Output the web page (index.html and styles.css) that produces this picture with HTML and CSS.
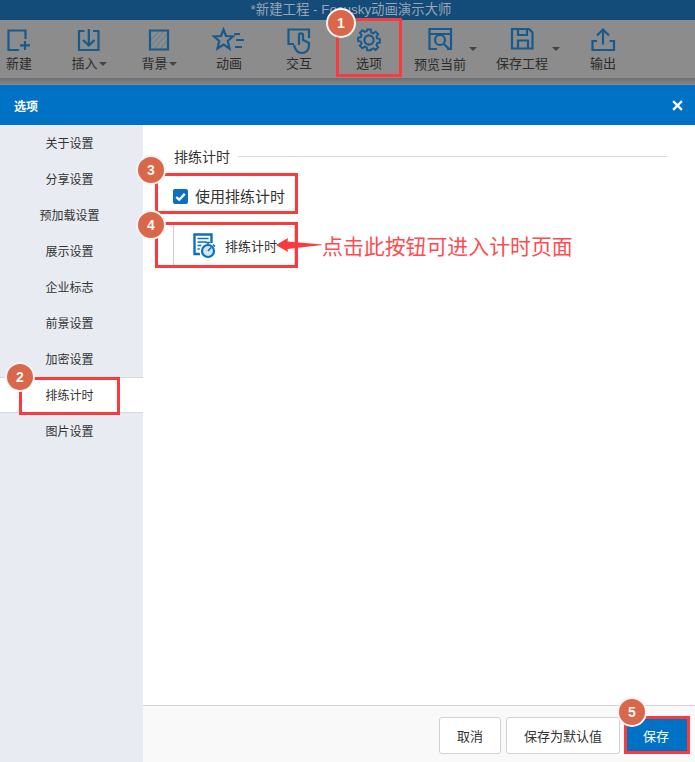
FILE: index.html
```html
<!DOCTYPE html>
<html lang="zh-CN">
<head>
    <meta charset="UTF-8">
    <title>选项</title>
    <link rel="stylesheet" href="styles.css">
</head>
<body>
    <div class="app">
        <div class="titlebar">*新建工程 - Focusky动画演示大师</div>

        <div class="toolbar">
            <div class="tool">
                <svg class="tool-icon" viewBox="0 0 26 26"><path d="M13 24H2.500V4.500H19.500V13M14 19.300H24M19 15V24"/></svg>
                <span>新建</span>
            </div>
            <div class="tool">
                <svg class="tool-icon" viewBox="0 0 26 26"><path d="M8.500 5H3V24H22.500V5H17M12.800 3V19.500M7 14L12.800 19.500 18.500 14"/></svg>
                <span>插入<i class="caret"></i></span>
            </div>
            <div class="tool">
                <svg class="tool-icon" viewBox="0 0 26 26"><path class="hatch" d="M5 14l8-9M5 20L18 5M8 23L21 8M14 23l7-8"/><path d="M4 4.500h18v19H4z"/></svg>
                <span>背景<i class="caret"></i></span>
            </div>
            <div class="tool">
                <svg class="tool-icon wide" viewBox="0 0 32 26"><path d="M10.500 3.500L13 10l7 .5-5.200 4.500 1.700 7.500-6-4-6 4L6.200 15 1 10.500 8 10zM21 8h6M23 14h8M22 21h7"/></svg>
                <span>动画</span>
            </div>
            <div class="tool">
                <svg class="tool-icon" viewBox="0 0 26 26"><path d="M8 18H2.500V3.500H23V12M8 19c1 4 3 8 7.500 8s7.500-3 7.500-8v-2l-6-3V9c0-2.200-4-2.200-4 0v10"/></svg>
                <span>交互</span>
            </div>
            <div class="tool">
                <svg class="tool-icon" viewBox="0 0 26 26"><path d="M11 2h4l.6 3.200 2 .9 2.800-1.800 2.700 2.800-1.800 2.700.8 2 3 .7v3.900l-3 .7-.8 2 1.800 2.700-2.700 2.800-2.800-1.800-2 .9L15 25h-4l-.6-3.200-2-.9-2.800 1.800-2.700-2.800 1.800-2.700-.8-2-3-.7V11l3-.7.8-2-1.800-2.700 2.700-2.800 2.800 1.800 2-.9z" transform="translate(1.300 1.800) scale(.9)"/><circle cx="13" cy="14" r="4.600"/></svg>
                <span>选项</span>
            </div>
            <div class="tool tool-preview">
                <svg class="tool-icon" viewBox="0 0 26 26"><path d="M10 23H2.500V3H24V23H20M2.500 8H24"/><circle cx="13" cy="14" r="5"/><path d="M17 18l5 5"/></svg>
                <span>预览当前</span>
                <i class="caret caret-side"></i>
            </div>
            <div class="tool tool-save">
                <svg class="tool-icon" viewBox="0 0 26 26"><path d="M3 3H20L23.500 6.500V22.500H3ZM9 3V9H18V3M9 22.500V14.500H19V22.500"/></svg>
                <span>保存工程</span>
                <i class="caret caret-side"></i>
            </div>
            <div class="tool">
                <svg class="tool-icon" viewBox="0 0 26 26"><path d="M7 15H2.500V24H24V15H19.500M13 18.500V3.500M7 9.500L13 3.500 19 9.500"/></svg>
                <span>输出</span>
            </div>
        </div>
        <div class="toolbar-shadow"></div>

        <div class="dialog-head">
            <span class="dialog-title">选项</span>
            <svg class="dialog-close" viewBox="0 0 10 10"><path d="M1 1l8 8M9 1l-8 8"/></svg>
        </div>

        <div class="dialog-body">
            <ul class="side-menu">
                <li>关于设置</li>
                <li>分享设置</li>
                <li>预加载设置</li>
                <li>展示设置</li>
                <li>企业标志</li>
                <li>前景设置</li>
                <li>加密设置</li>
                <li class="active">排练计时</li>
                <li>图片设置</li>
            </ul>

            <div class="main">
                <div class="content">
                    <div class="section-head">
                        <span>排练计时</span>
                        <div class="section-line"></div>
                    </div>
                    <div class="check-row">
                        <span class="checkbox">
                            <svg viewBox="0 0 14 14"><path d="M3 7.500l2.800 2.500L11 4.500"/></svg>
                        </span>
                        <span>使用排练计时</span>
                    </div>
                    <div class="timer-button">
                        <svg class="timer-icon" viewBox="0 0 26 26">
                            <path class="doc" d="M18.500 11V2.500H1.500V22H7"/>
                            <path class="doc-thin" d="M4.500 6.500h11M4.500 10h9M4.500 13.500h4M4.500 17h3"/>
                            <circle class="clock-gap" cx="15" cy="19" r="8.500"/>
                            <circle class="clock" cx="15" cy="19" r="6"/>
                            <path class="clock-hand" d="M12.500 10.500h5M15 11v2M15 19l3-3.500M20 12.500l2 2"/>
                        </svg>
                        <span>排练计时</span>
                    </div>
                </div>
                <div class="footer">
                    <button class="btn">取消</button>
                    <button class="btn btn-default">保存为默认值</button>
                    <button class="btn btn-save">保存</button>
                </div>
            </div>
        </div>

        <!-- annotations on top of the screenshot -->
        <div class="mark mark-1"></div>
        <div class="mark mark-2"></div>
        <div class="mark mark-3"></div>
        <div class="mark mark-4"></div>
        <div class="mark mark-5"></div>
        <div class="badge badge-1">1</div>
        <div class="badge badge-2">2</div>
        <div class="badge badge-3">3</div>
        <div class="badge badge-4">4</div>
        <div class="badge badge-5">5</div>
        <svg class="arrow" viewBox="0 0 48 16"><path d="M1 8L13 1l-.5 3.500L47 7.500V8L12.500 12l.5 3z"/></svg>
        <div class="note">点击此按钮可进入计时页面</div>
    </div>
</body>
</html>
```

FILE: styles.css
```css
* {
    box-sizing: border-box;
}
body {
    margin: 0;
    font-family: "Noto Sans CJK SC", "Liberation Sans", sans-serif;
    color: #333;
}
.app {
    position: relative;
    display: flex;
    flex-direction: column;
    width: 695px;
    height: 762px;
    overflow: hidden;
    background: white;
}

/* top window */
.titlebar {
    height: 20px;
    padding-left: 7px;
    background-color: #134b79;
    color: #9aa6b3;
    font-family: "Liberation Sans", "Noto Sans CJK SC", sans-serif;
    font-size: 13.400px;
    line-height: 20px;
    text-align: center;
}
.toolbar {
    display: flex;
    height: 58px;
    margin-left: -16px;
    background-color: #8c8c8c;
}
.tool {
    position: relative;
    display: flex;
    flex-direction: column;
    align-items: center;
    width: 70px;
    padding-top: 6px;
    font-size: 13px;
    line-height: 18px;
    color: #2b2b2b;
}
.tool-preview {
    width: 72px;
}
.tool-save {
    width: 92px;
}
.tool-icon {
    width: 26px;
    height: 26px;
    margin-bottom: 2px;
    overflow: visible;
    fill: none;
    stroke: #175a8e;
    stroke-width: 2.200;
}
.tool-preview .tool-icon {
    margin-bottom: 3px;
}
.tool-icon.wide {
    width: 32px;
}
.tool-icon .hatch {
    stroke: #5d7d98;
    stroke-width: 1;
}
.caret {
    display: inline-block;
    margin-left: 1px;
    vertical-align: middle;
    border-left: 4px solid transparent;
    border-right: 4px solid transparent;
    border-top: 4px solid #444;
}
.caret-side {
    position: absolute;
    top: 27px;
    right: -1px;
}
.tool-save .caret-side {
    right: 8px;
}
.toolbar-shadow {
    height: 7px;
    background: linear-gradient(#6e6e72, #8a8a8c);
}

/* dialog */
.dialog-head {
    display: flex;
    align-items: center;
    justify-content: space-between;
    height: 40px;
    padding: 0 12px 0 14px;
    background-color: #0072c6;
    color: white;
}
.dialog-title {
    font-size: 12px;
    font-weight: bold;
}
.dialog-close {
    width: 11px;
    height: 11px;
    fill: none;
    stroke: white;
    stroke-width: 2;
}
.dialog-body {
    display: flex;
    flex: 1;
}
.side-menu {
    width: 143px;
    margin: 0;
    padding: 0;
    list-style: none;
    background-color: #e8ebf1;
    font-size: 12px;
}
.side-menu li {
    height: 36px;
    padding-right: 4px;
    line-height: 36px;
    text-align: center;
}
.side-menu li.active {
    background: white;
    border-top: 1px solid #d5d8de;
    border-bottom: 1px solid #d5d8de;
    line-height: 34px;
}
.main {
    display: flex;
    flex: 1;
    flex-direction: column;
}
.content {
    flex: 1;
    padding: 21px 28px 0 30px;
}
.section-head {
    display: flex;
    align-items: center;
    gap: 8px;
    padding-left: 1px;
    font-size: 14px;
    line-height: 20px;
}
.section-line {
    flex: 1;
    height: 1px;
    background-color: #d6d9e0;
}
.check-row {
    display: flex;
    align-items: center;
    gap: 7px;
    margin-top: 20px;
    font-size: 15px;
    line-height: 20px;
}
.checkbox {
    display: flex;
    width: 15px;
    height: 15px;
    border-radius: 2px;
    background-color: #0b70c2;
}
.checkbox svg {
    fill: none;
    stroke: white;
    stroke-width: 2.200;
}
.timer-button {
    display: flex;
    align-items: center;
    gap: 6px;
    width: 122px;
    height: 42px;
    margin-top: 18px;
    padding-left: 19px;
    border: 1px solid #cfcfcf;
    border-radius: 2px;
    font-size: 13px;
}
.timer-icon {
    flex: none;
    width: 26px;
    height: 26px;
    overflow: visible;
    fill: none;
}
.timer-icon .doc {
    stroke: #0b70c2;
    stroke-width: 2.400;
}
.timer-icon .doc-thin {
    stroke: #0b70c2;
    stroke-width: 1.400;
}
.timer-icon .clock-gap {
    fill: white;
}
.timer-icon .clock {
    fill: #d3e6f6;
    stroke: #0b70c2;
    stroke-width: 2.200;
}
.timer-icon .clock-hand {
    stroke: #0b70c2;
    stroke-width: 1.600;
}
.footer {
    display: flex;
    justify-content: flex-end;
    gap: 5px;
    height: 57px;
    padding: 11px 7px 0 0;
    border-top: 1px solid #d4d4d4;
    background-color: #f9f9f9;
}
.btn {
    width: 62px;
    height: 37px;
    padding: 0;
    border: 1px solid #d2d2d2;
    border-radius: 3px;
    background: white;
    color: #333;
    font-family: inherit;
    font-size: 13px;
}
.btn-default {
    width: 114px;
}
.btn-save {
    width: 61px;
    margin-left: 2px;
    padding-right: 3px;
    border: none;
    border-radius: 0;
    background-color: #0072c6;
    color: white;
}

/* red marks and numbered badges */
.mark {
    position: absolute;
    border: 3px solid #fb3a3e;
}
.mark-1 {
    left: 336px;
    top: 18px;
    width: 66px;
    height: 59px;
}
.mark-2 {
    left: 19px;
    top: 377px;
    width: 101px;
    height: 38px;
}
.mark-3 {
    left: 155px;
    top: 173px;
    width: 143px;
    height: 41px;
}
.mark-4 {
    left: 155px;
    top: 222px;
    width: 143px;
    height: 46px;
}
.mark-5 {
    left: 624px;
    top: 716px;
    width: 66px;
    height: 38px;
}
.badge {
    position: absolute;
    width: 30px;
    height: 30px;
    border: 2px solid #f4f4f4;
    border-radius: 50%;
    background-color: #d9674a;
    color: #f6f6f6;
    font-family: "Liberation Sans", sans-serif;
    font-size: 14px;
    font-weight: bold;
    line-height: 26px;
    text-align: center;
}
.badge-1 {
    left: 326px;
    top: 8px;
}
.badge-2 {
    left: 5px;
    top: 362px;
}
.badge-3 {
    left: 136px;
    top: 155px;
}
.badge-4 {
    left: 136px;
    top: 210px;
}
.badge-5 {
    left: 617px;
    top: 697px;
}
.arrow {
    position: absolute;
    left: 275px;
    top: 237px;
    width: 48px;
    height: 16px;
    fill: #fb3a3e;
}
.note {
    position: absolute;
    left: 322px;
    top: 230px;
    color: #ff4b4f;
    font-size: 20.900px;
    line-height: 30px;
    white-space: nowrap;
}
```
